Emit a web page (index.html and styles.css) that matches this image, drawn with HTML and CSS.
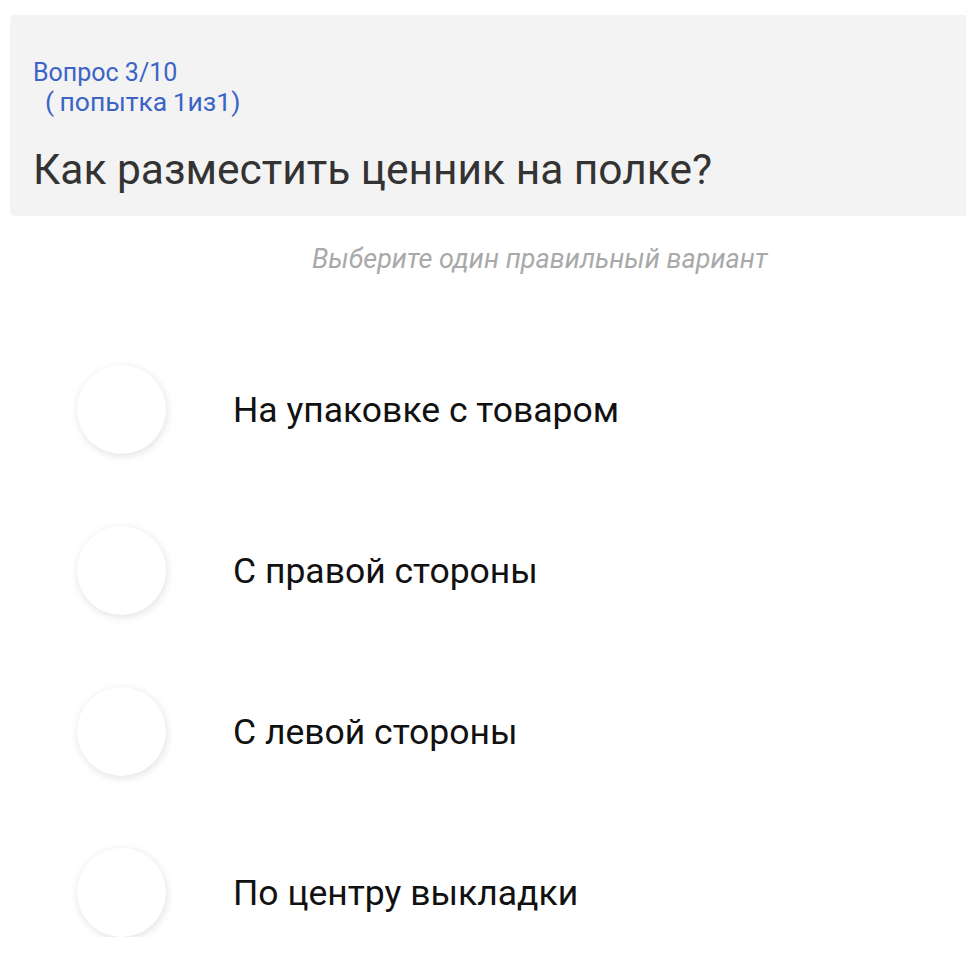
FILE: index.html
```html
<!DOCTYPE html>
<html lang="ru">
<head>
  <meta charset="UTF-8">
  <meta name="viewport" content="width=device-width, initial-scale=1">
  <title>Вопрос 3/10</title>
  <link rel="stylesheet" href="styles.css">
</head>
<body>

  <div class="vopros">
    <div class="nomer">Вопрос 3/10</div>
    <div class="popytka">(&thinsp;попытка&thinsp;1из1)</div>
    <h1>Как разместить ценник на полке?</h1>
  </div>

  <div class="podskazka">Выберите один правильный вариант</div>

  <div class="varianty">
    <label class="variant">
      <span class="krug"></span>
      <span class="tekst">На упаковке с товаром</span>
    </label>
    <label class="variant">
      <span class="krug"></span>
      <span class="tekst">С правой стороны</span>
    </label>
    <label class="variant">
      <span class="krug"></span>
      <span class="tekst">С левой стороны</span>
    </label>
    <label class="variant">
      <span class="krug"></span>
      <span class="tekst">По центру выкладки</span>
    </label>
  </div>

</body>
</html>
```

FILE: styles.css
```css
:root {
  --fon-voprosa: #f3f3f3;
  --siniy: #3b64c6;
  --tekst: #333;
  --seryy: #a9a9a9;
}

* {
  box-sizing: border-box;
}

body {
  margin: 0;
  background: white;
  font-family: Roboto, "Noto Sans", sans-serif;
  color: #111;
  overflow: hidden;
}

.vopros {
  margin: 15px 0 0 10px;
  padding: 44px 24px 0 23px;
  background: var(--fon-voprosa);
  border-radius: 5px 0 0 5px;
  height: 201px;
}

.nomer,
.popytka {
  color: var(--siniy);
}

.nomer {
  font-size: 25px;
  line-height: 28px;
}

.popytka {
  padding-left: 12px;
  font-size: 26.5px;
  line-height: 30px;
}

h1 {
  margin: 28px 0 0;
  font-size: 42.5px;
  font-weight: 400;
  line-height: 50px;
  color: var(--tekst);
}

.podskazka {
  margin: 27px 0 0 312px;
  font-size: 27px;
  line-height: 32px;
  font-style: italic;
  color: var(--seryy);
}

.varianty {
  display: flex;
  flex-direction: column;
  gap: 72px;
  margin-top: 90px;
  padding-left: 77px;
}

.variant {
  display: flex;
  align-items: center;
  gap: 67px;
  cursor: pointer;
}

.krug {
  width: 89px;
  height: 89px;
  border-radius: 50%;
  background: white;
  box-shadow: 1px 2px 8px rgba(0, 0, 0, 0.12);
  flex-shrink: 0;
}

.tekst {
  font-size: 35.5px;
}
```
